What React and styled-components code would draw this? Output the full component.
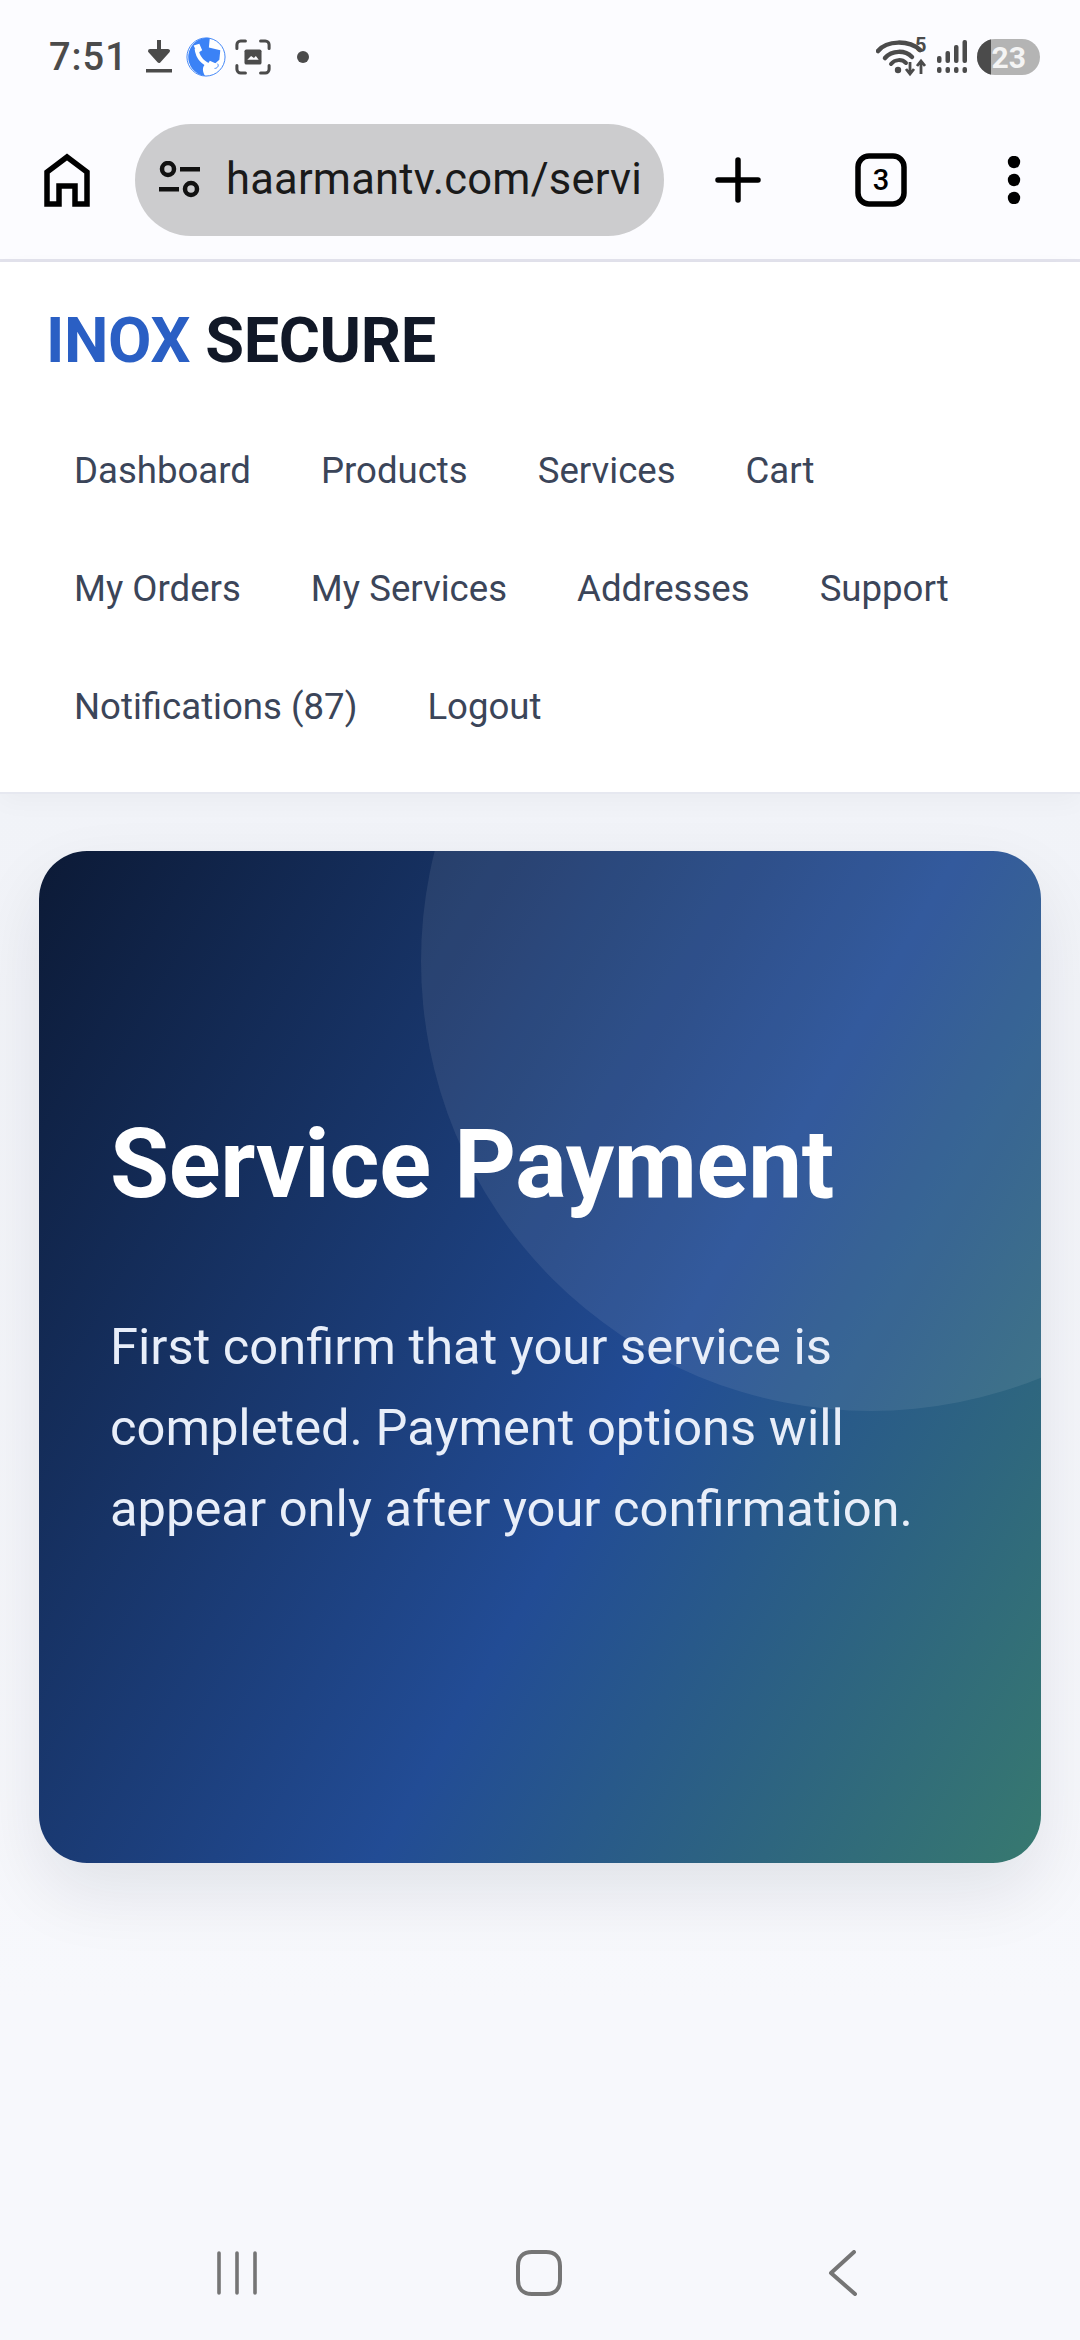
import React from "react";
import styled, { createGlobalStyle } from "styled-components";

const Global = createGlobalStyle`
  html, body { margin: 0; padding: 0; background: #f5f7fb; }
  * { box-sizing: border-box; }
  #root { width: 1080px; }
`;
const Screen = styled.div`
  width: 1080px; height: 2340px; display: flex; flex-direction: column;
  font-family: Roboto, "Liberation Sans", sans-serif; overflow: hidden;
  background: linear-gradient(180deg, #f1f3f8 800px, #f7f8fc 2000px);
`;
const Chrome = styled.header`
  background: #fcfcff; height: 262px; border-bottom: 3px solid #e2e2ec; flex: none;
`;
const StatusBar = styled.div`
  height: 114px; padding: 0 40px 0 49px; display: flex; align-items: center; justify-content: space-between;
`;
const StatusGroup = styled.div`
  display: flex; align-items: center; gap: ${p => p.$gap || 0}px;
`;
const Clock = styled.span`
  font-size: 38px; font-weight: 500; color: #4b4b4b; letter-spacing: 1px; margin-right: 11px;
`;
const Toolbar = styled.div`
  height: 145px; padding: 0 44px; display: flex; align-items: center; margin-top: -7px;
`;
const Omnibox = styled.div`
  width: 529px; height: 112px; margin: 0 51px 0 45px; border-radius: 56px; background: #cccccE;
  display: flex; align-items: center; padding: 0 23px 0 23px; gap: 24px; flex: none;
`;
const Url = styled.div`
  font-size: 43.5px; color: #1a1a1a; white-space: nowrap; overflow: hidden; flex: 1; letter-spacing: 0.2px;
`;
const ToolSpot = styled.div`
  display: flex; align-items: center; justify-content: center; flex: none; width: ${p => p.$w}px; margin-left: ${p => p.$ml || 0}px;
`;
const NavPanel = styled.nav`
  background: #fff; height: 532px; flex: none; padding: 44px 38px 0 39px;
  border-bottom: 2px solid #e6e8f0; box-shadow: 0 8px 24px rgba(15, 23, 42, 0.03); position: relative;
`;
const Logo = styled.div`
  font-size: 63px; line-height: 70px; font-weight: 700; color: #111827; padding-left: 7px; letter-spacing: -0.4px;
  span { color: #2a5fc4; }
`;
const Links = styled.div`
  display: flex; flex-wrap: wrap; margin-top: 36px;
`;
const NavLink = styled.a`
  font-size: 36.6px; line-height: 42px; color: #3b4559; padding: 38px 35px; white-space: nowrap;
`;
const Main = styled.main`
  flex: 1; padding: 57px 39px 0;
`;
const Hero = styled.section`
  position: relative; overflow: hidden; height: 1012px; border-radius: 48px; padding: 257px 71px 0;
  background: linear-gradient(120deg, #0c1a36 0%, #224c95 58%, #37796f 100%);
  color: #fff;
`;
const HeroShadow = styled.div`
  border-radius: 48px; box-shadow: 0 30px 70px rgba(15, 23, 42, 0.09);
`;
const Bubble = styled.div`
  position: absolute; width: 900px; height: 900px; border-radius: 50%; top: -340px; right: -280px;
  background: rgba(255, 255, 255, 0.08);
`;
const Title = styled.h1`
  position: relative; margin: 0; font-size: 96px; line-height: 112px; font-weight: 700; letter-spacing: -0.3px;
`;
const Body = styled.p`
  position: relative; margin: 86px 0 0; font-size: 50.7px; line-height: 81px; color: #e8eef9; font-weight: 400; width: 880px;
`;
const SystemBar = styled.div`
  height: 130px; flex: none; background: #f7f8fc; display: flex; align-items: center; padding: 0 0 4px 216px;
`;
const SysSpot = styled.div`
  display: flex; align-items: center; margin-right: ${p => p.$mr || 0}px;
`;

const StatusIcon = () => (
  <svg width="40" height="40" viewBox="0 0 40 40" style={{ marginRight: 7 }}>
    <path d="M20 3v18M11 14l9 10 9-10z" fill="#4b4b4b" stroke="#4b4b4b" strokeWidth="4" strokeLinejoin="round" />
    <rect x="7" y="32" width="26" height="3.5" fill="#4b4b4b" />
  </svg>
);
const PhoneBadge = () => (
  <svg width="40" height="40" viewBox="0 0 42 42" style={{ marginRight: 9 }}>
    <circle cx="21" cy="21" r="20" fill="#fff" stroke="#3b82f6" strokeWidth="1" />
    <path d="M25 1 A20 20 0 0 0 20 41 C17 36 17 32 20 29 L27 31 L35 24 L36 14 L24 11 Z" fill="#3b82f6" />
    <path d="M11 12c1 9 7 16 17 19" fill="none" stroke="#fff" strokeWidth="4" />
    <path d="M8 9l6-2 3 7-5 3zM22 30l3-5 7 3-2 6z" fill="#fff" />
    <path d="M30 33c3 0 5-3 3-5" fill="none" stroke="#3b82f6" strokeWidth="1" />
  </svg>
);
const ScreenshotIcon = () => (
  <svg width="36" height="36" viewBox="0 0 38 38" fill="none" stroke="#4b4b4b" strokeWidth="3.2" strokeLinecap="round" style={{ marginRight: 25 }}>
    <path d="M2 10V6a4 4 0 0 1 4-4h5M27 2h5a4 4 0 0 1 4 4v4M36 28v4a4 4 0 0 1-4 4h-5M11 36H6a4 4 0 0 1-4-4v-4" />
    <rect x="10" y="11" width="18" height="16" rx="2" fill="#4b4b4b" stroke="none" />
    <path d="M13 22l4-4 3 2 2-2 3 4z" fill="#fcfcff" stroke="none" />
  </svg>
);
const Dot = () => (
  <svg width="14" height="14" viewBox="0 0 14 14"><circle cx="7" cy="7" r="6" fill="#4b4b4b" /></svg>
);
const WifiIcon = () => (
  <svg width="50" height="40" viewBox="0 0 50 40" fill="none" style={{ display: "block" }}>
    <path d="M2 14C11 3 33 3 44 13" stroke="#4b4b4b" strokeWidth="4.5" strokeLinecap="round" />
    <path d="M9 21C16 13 29 13 36 20" stroke="#4b4b4b" strokeWidth="4.5" strokeLinecap="round" />
    <path d="M15 27C19 22 26 22 30 26" stroke="#4b4b4b" strokeWidth="4" strokeLinecap="round" />
    <circle cx="22" cy="33" r="3.2" fill="#4b4b4b" />
    <path d="M34 25v12M30 32l4 5 4-5" stroke="#4b4b4b" strokeWidth="2.8" />
    <path d="M45 37V24M41 29l4-5 4 5" stroke="#4b4b4b" strokeWidth="2.8" />
  </svg>
);
const WifiFive = styled.span`
  font-size: 20px; font-weight: 700; color: #4b4b4b; line-height: 20px; margin: -24px 0 0 -11px; width: 12px;
`;
const SignalIcon = () => (
  <svg width="30" height="34" viewBox="0 0 30 34" fill="#4b4b4b" style={{ marginLeft: 10, marginRight: 10 }}>
    <rect x="0" y="16" width="4.5" height="7" rx="2" /><rect x="0" y="27" width="4.5" height="6" rx="2" />
    <rect x="8.5" y="11" width="4.5" height="12" rx="2" /><rect x="8.5" y="27" width="4.5" height="6" rx="2" />
    <rect x="17" y="5" width="4.5" height="18" rx="2" /><rect x="17" y="27" width="4.5" height="6" rx="2" />
    <rect x="25.5" y="0" width="4.5" height="23" rx="2" /><rect x="25.5" y="27" width="4.5" height="6" rx="2" />
  </svg>
);
const Battery = styled.div`
  position: relative; width: 63px; height: 36px; border-radius: 18px; overflow: hidden; background: #b4b4b4;
  color: #f4f4f4; font-size: 30px; font-weight: 700; display: flex; align-items: center; justify-content: flex-end; padding-right: 14px;
  &::before { content: ""; position: absolute; left: 0; top: 0; bottom: 0; width: 14px; background: #4b4b4b; }
`;
const HomeIcon = () => (
  <svg width="46" height="54" viewBox="0 0 46 54" fill="none" stroke="#000" strokeWidth="5.5" strokeLinejoin="miter">
    <path d="M3 51V19L23 4l20 15v32H31V33H15v18z" />
  </svg>
);
const TuneIcon = () => (
  <svg width="44" height="38" viewBox="0 0 44 38">
    <g fill="none" stroke="#111" strokeWidth="4.5">
      <circle cx="10" cy="8" r="6" /><circle cx="33" cy="28" r="6" />
    </g>
    <rect x="22" y="6" width="20" height="4.5" fill="#111" />
    <rect x="1" y="26" width="20" height="4.5" fill="#111" />
  </svg>
);
const PlusIcon = () => (
  <svg width="46" height="46" viewBox="0 0 46 46" stroke="#000" strokeWidth="5.5" strokeLinecap="round">
    <path d="M23 3v40M3 23h40" />
  </svg>
);
const TabsIcon = () => (
  <svg width="52" height="54" viewBox="0 0 52 54">
    <rect x="3" y="3" width="46" height="48" rx="11" fill="none" stroke="#000" strokeWidth="5.5" />
    <text x="26" y="37" textAnchor="middle" fontSize="29" fontWeight="500" fontFamily="Roboto, sans-serif" fill="#000">3</text>
  </svg>
);
const MenuIcon = () => (
  <svg width="14" height="48" viewBox="0 0 14 48" fill="#000">
    <circle cx="7" cy="6" r="6.2" /><circle cx="7" cy="24" r="6.2" /><circle cx="7" cy="42" r="6.2" />
  </svg>
);
const Recents = () => (
  <svg width="42" height="44" viewBox="0 0 42 44" stroke="#757575" strokeWidth="3.6" strokeLinecap="round">
    <path d="M3 2v40M21 2v40M39 2v40" />
  </svg>
);
const HomeSys = () => (
  <svg width="46" height="46" viewBox="0 0 46 46" fill="none" stroke="#757575" strokeWidth="4">
    <path d="M16 2h14c9 0 14 5 14 14v14c0 9-5 14-14 14H16C7 44 2 39 2 30V16C2 7 7 2 16 2z" />
  </svg>
);
const BackSys = () => (
  <svg width="30" height="46" viewBox="0 0 30 46" fill="none" stroke="#757575" strokeWidth="4" strokeLinecap="round" strokeLinejoin="round">
    <path d="M26 2L3 23l24 21" />
  </svg>
);

const rows = ["Dashboard", "Products", "Services", "Cart", "My Orders", "My Services", "Addresses", "Support", "Notifications (87)", "Logout"];

export default function App() {
  return (
    <Screen>
      <Global />
      <Chrome>
        <StatusBar>
          <StatusGroup>
            <Clock>7:51</Clock>
            <StatusIcon />
            <PhoneBadge />
            <ScreenshotIcon />
            <Dot />
          </StatusGroup>
          <StatusGroup>
            <WifiIcon />
            <WifiFive>5</WifiFive>
            <SignalIcon />
            <Battery>23</Battery>
          </StatusGroup>
        </StatusBar>
        <Toolbar>
          <HomeIcon />
          <Omnibox>
            <TuneIcon />
            <Url>haarmantv.com/services/payment</Url>
          </Omnibox>
          <ToolSpot $w={46}><PlusIcon /></ToolSpot>
          <ToolSpot $w={52} $ml={94}><TabsIcon /></ToolSpot>
          <ToolSpot $w={14} $ml={100}><MenuIcon /></ToolSpot>
        </Toolbar>
      </Chrome>
      <NavPanel>
        <Logo><span>INOX</span> SECURE</Logo>
        <Links>
          {rows.map(r => <NavLink key={r}>{r}</NavLink>)}
        </Links>
      </NavPanel>
      <Main>
        <HeroShadow>
          <Hero>
            <Bubble />
            <Title>Service Payment</Title>
            <Body>First confirm that your service is completed. Payment options will appear only after your confirmation.</Body>
          </Hero>
        </HeroShadow>
      </Main>
      <SystemBar>
        <SysSpot $mr={258}><Recents /></SysSpot>
        <SysSpot $mr={266}><HomeSys /></SysSpot>
        <SysSpot><BackSys /></SysSpot>
      </SystemBar>
    </Screen>
  );
}
